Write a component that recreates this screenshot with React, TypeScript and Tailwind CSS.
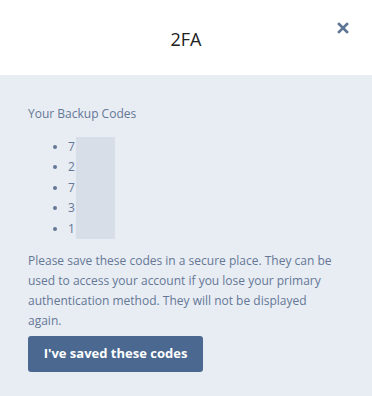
const codes = ["7", "2", "7", "3", "1"];

export default function App() {
  return (
    <div
      className="flex h-[396px] w-[372px] flex-col bg-white"
      style={{ fontFamily: '"Open Sans", "Noto Sans", sans-serif' }}
    >
      <div className="relative flex h-[75px] shrink-0 items-center justify-center bg-white pt-[4px]">
        <h1 className="text-[18px] font-normal text-[#222]">2FA</h1>
        <button className="absolute right-[22px] top-[21px] text-[#5d7594]" aria-label="Close">
          <svg width="14" height="14" viewBox="0 0 14 14" fill="none" stroke="currentColor" strokeWidth="2.6" strokeLinecap="square">
            <path d="M3 3l8 8M11 3l-8 8" />
          </svg>
        </button>
      </div>

      <div className="flex-1 bg-[#e8ecf3] pl-[28px] pr-[34px] pt-[29px] text-[12px] text-[#647896]">
        <p className="leading-[20px]">Your Backup Codes</p>
        <ul className="mt-[13px] list-disc pl-[40px] leading-[20.4px] marker:text-[#647896]">
          {codes.map((c, i) => (
            <li key={i}>
              <span className="inline-flex">
                {c}
                <span className="ml-[1px] inline-block h-[20.4px] w-[39px] bg-[#d8dee7] align-top" />
              </span>
            </li>
          ))}
        </ul>
        <p className="mt-[12px] leading-[20px]">
          Please save these codes in a secure place. They can be used to access your account if you lose your
          primary authentication method. They will not be displayed again.
        </p>
        <button className="mt-[5px] h-[36px] w-[175px] rounded-[3px] bg-[#4a6890] text-[13px] font-bold text-white">
          I've saved these codes
        </button>
      </div>
    </div>
  );
}
